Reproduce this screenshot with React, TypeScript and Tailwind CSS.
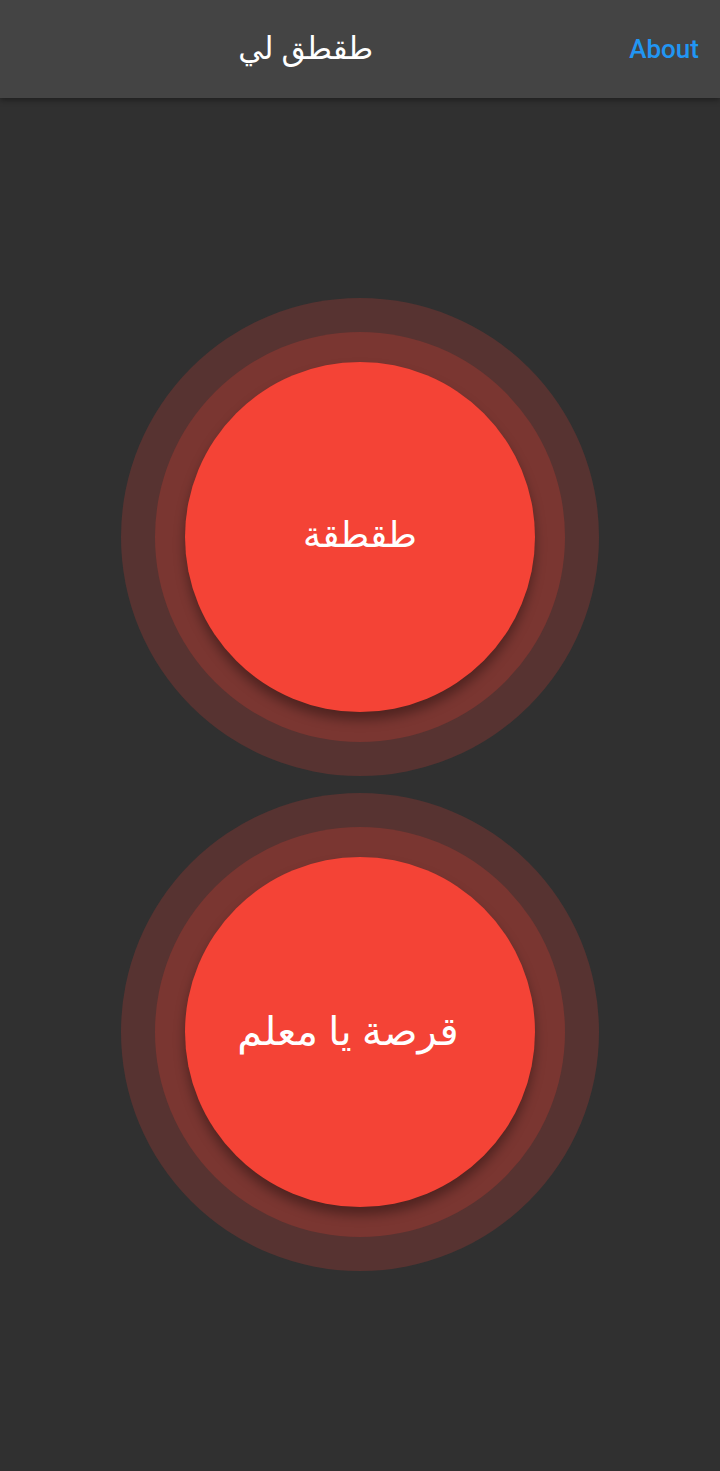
import React from "react";

function BigButton({ label, extra }: { label: string; extra?: string }) {
  return (
    <div className="w-[478px] h-[478px] rounded-full bg-[#573331] flex items-center justify-center">
      <div className="w-[410px] h-[410px] rounded-full bg-[#7a3631] flex items-center justify-center">
        <button className="w-[350px] h-[350px] rounded-full bg-[#f44336] flex items-center justify-center shadow-[0_8px_12px_rgba(0,0,0,0.35)]">
          <span
            dir="rtl"
            className={
              "text-white leading-none font-['Noto_Sans','DejaVu_Sans',sans-serif] " +
              (extra ?? "")
            }
          >
            {label}
          </span>
        </button>
      </div>
    </div>
  );
}

export default function App() {
  return (
    <div className="w-[720px] h-[1471px] bg-[#303030] flex flex-col">
      <header className="h-[98px] bg-[#444444] flex items-center shadow-[0_2px_6px_rgba(0,0,0,0.4)] relative z-10">
        <div className="flex-1 flex justify-center pr-[18px]">
          <span dir="rtl" className="text-white text-[31px] leading-none -mt-[4px] font-['Noto_Sans','DejaVu_Sans',sans-serif]">
            طقطق لي
          </span>
        </div>
        <span className="text-[#2196f3] text-[26px] font-medium pr-[21px] font-['Roboto',sans-serif]">About</span>
      </header>
      <main className="flex flex-col items-center pt-[200px] gap-[17px]">
        <BigButton label="طقطقة" extra="text-[36px] -mt-[6px]" />
        <BigButton label="قرصة يا معلم" extra="text-[40px] mr-[24px] -mt-[4px]" />
      </main>
    </div>
  );
}
